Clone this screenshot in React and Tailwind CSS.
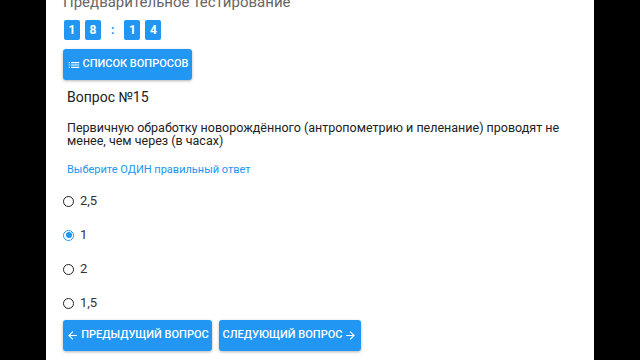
import React from 'react';

const answers = ['2,5', '1', '2', '1,5'];

const Digit = ({ d }) => (
  <span className="flex h-[20px] w-[16px] items-center justify-center rounded-[2px] bg-[#2196f3] text-[12px] font-bold text-white">
    {d}
  </span>
);

const ListIcon = () => (
  <svg width="14" height="14" viewBox="0 0 24 24" fill="white">
    <path d="M3 13h2v-2H3v2zm0 4h2v-2H3v2zm0-8h2V7H3v2zm4 4h14v-2H7v2zm0 4h14v-2H7v2zM7 7v2h14V7H7z" />
  </svg>
);

const Arrow = ({ left }) => (
  <svg width="13" height="13" viewBox="0 0 24 24" fill="white" className={left ? '' : 'rotate-180'}>
    <path d="M20 11H7.83l5.59-5.59L12 4l-8 8 8 8 1.41-1.41L7.83 13H20v-2z" />
  </svg>
);

export default function App() {
  return (
    <div className="flex h-[360px] w-[640px] overflow-hidden bg-black font-['Roboto',sans-serif]">
      <div className="ml-[46px] h-full w-[548px] bg-white pl-[17px]">
        <h1 className="-mt-[7px] text-[15px] leading-[18px] text-[#666]">Предварительное тестирование</h1>
        <div className="mt-[9px] ml-[1px] flex items-center gap-[5px]">
          <Digit d="1" />
          <Digit d="8" />
          <span className="mx-[5px] text-[12px] font-bold text-[#2196f3]">:</span>
          <Digit d="1" />
          <Digit d="4" />
        </div>
        <button className="mt-[9px] flex h-[31px] w-[129px] items-center justify-center gap-[2px] rounded-[3px] bg-[#2196f3] text-[11px] font-medium text-white shadow-[0_1px_3px_rgba(0,0,0,0.3)]">
          <ListIcon />
          СПИСОК ВОПРОСОВ
        </button>
        <div className="pl-[4px]">
          <div className="mt-[8px] text-[14px] leading-[18px] text-[#222]">Вопрос №15</div>
          <p className="mt-[15px] w-[500px] text-[12.5px] leading-[13px] text-[#222]">
            Первичную обработку новорождённого (антропометрию и пеленание) проводят не менее, чем через (в часах)
          </p>
          <div className="mt-[16px] text-[11px] leading-[13px] text-[#2196f3]">Выберите ОДИН правильный ответ</div>
        </div>
        <div className="mt-[18px] flex flex-col gap-[20px] pl-[0px]">
          {answers.map((a, i) => (
            <label key={a} className="flex h-[14px] items-center gap-[6px] text-[13px] text-[#333]">
              {i === 1 ? (
                <span className="flex h-[11px] w-[11px] items-center justify-center rounded-full border border-[#2196f3]">
                  <span className="h-[6px] w-[6px] rounded-full bg-[#2196f3]" />
                </span>
              ) : (
                <span className="h-[11px] w-[11px] rounded-full border border-[#222]" />
              )}
              {a}
            </label>
          ))}
        </div>
        <div className="mt-[10px] flex gap-[7px]">
          <button className="flex h-[31px] w-[149px] items-center justify-center gap-[2px] rounded-[3px] bg-[#2196f3] text-[11px] font-medium text-white shadow-[0_1px_3px_rgba(0,0,0,0.3)]">
            <Arrow left />
            ПРЕДЫДУЩИЙ ВОПРОС
          </button>
          <button className="flex h-[31px] w-[142px] items-center justify-center gap-[2px] rounded-[3px] bg-[#2196f3] text-[11px] font-medium text-white shadow-[0_1px_3px_rgba(0,0,0,0.3)]">
            СЛЕДУЮЩИЙ ВОПРОС
            <Arrow />
          </button>
        </div>
      </div>
    </div>
  );
}
